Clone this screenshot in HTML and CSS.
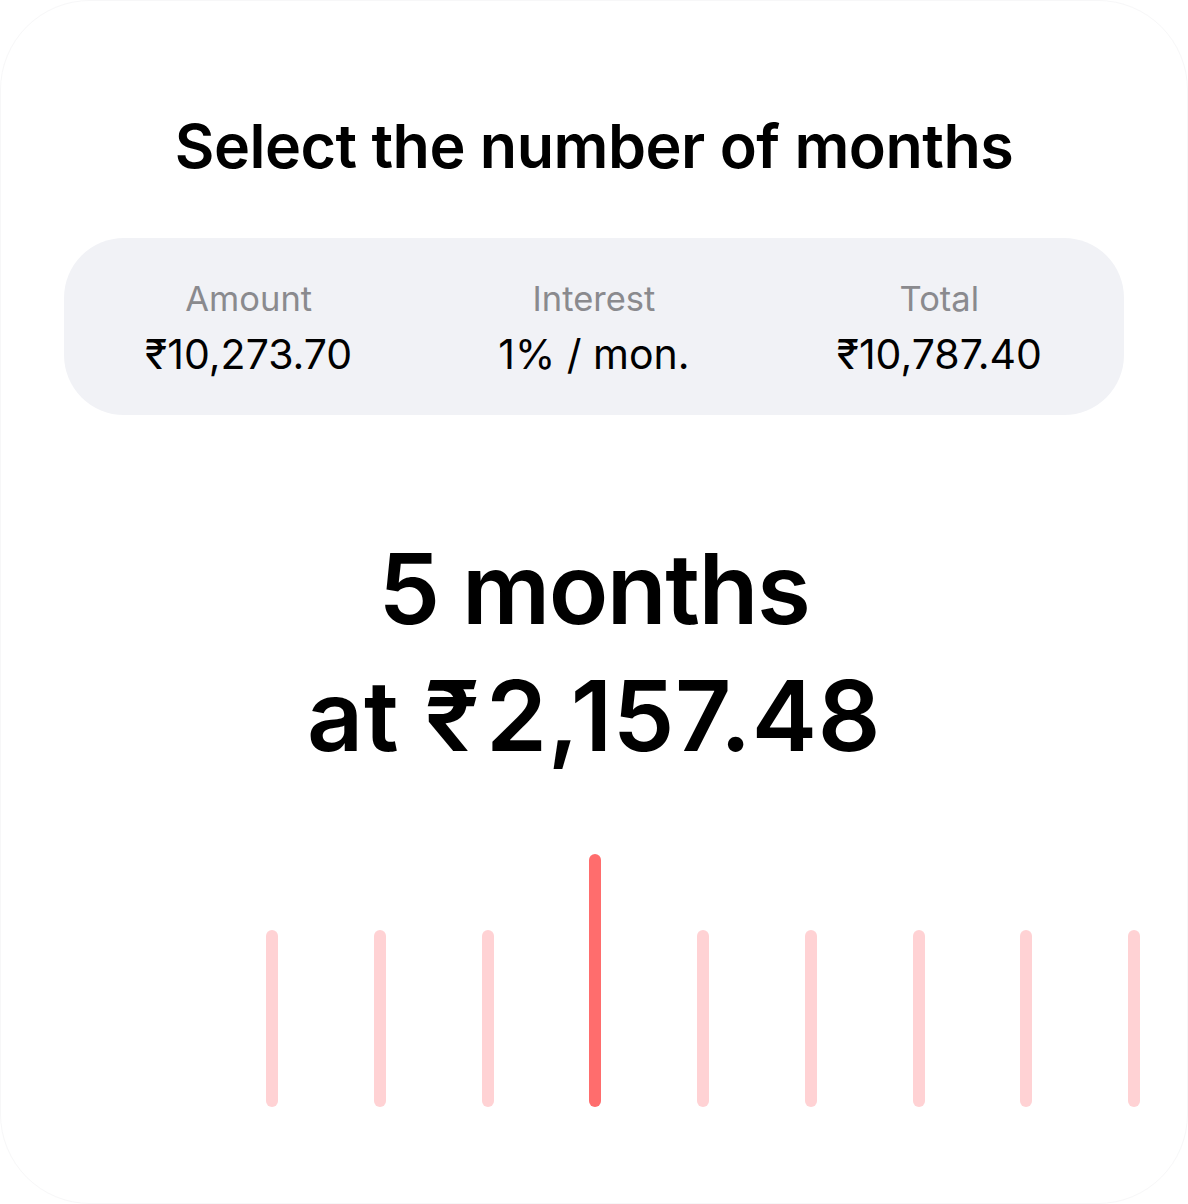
FILE: index.html
```html
<!DOCTYPE html>
<html lang="en">
<head>
    <meta charset="UTF-8">
    <meta name="viewport" content="width=device-width, initial-scale=1.0">
    <title>Select Tenure</title>
    <link rel="stylesheet" href="styles.css">
</head>
<body>
    <div class="sheet">
        <h1 class="title">Select the number of months</h1>

        <div class="summary">
            <div class="summary-item">
                <span class="label">Amount</span>
                <span class="value">₹10,273.70</span>
            </div>
            <div class="summary-item">
                <span class="label">Interest</span>
                <span class="value">1% / mon.</span>
            </div>
            <div class="summary-item">
                <span class="label">Total</span>
                <span class="value">₹10,787.40</span>
            </div>
        </div>

        <div class="selection">
            <div class="months">5 months</div>
            <div class="emi">at <span class="currency">₹</span>2,157.48</div>
        </div>

        <div class="ruler">
            <span class="tick"></span>
            <span class="tick"></span>
            <span class="tick"></span>
            <span class="tick active"></span>
            <span class="tick"></span>
            <span class="tick"></span>
            <span class="tick"></span>
            <span class="tick"></span>
            <span class="tick"></span>
        </div>
    </div>
</body>
</html>
```

FILE: styles.css
```css
:root {
    --text-color: #000000;
    --muted-color: #8a8a8e;
    --panel-background: #f1f2f6;
    --tick-color: #ffd2d4;
    --tick-active: #ff6d6d;
}

* {
    box-sizing: border-box;
}

body {
    margin: 0;
    background: #ffffff;
    font-family: Inter, "Noto Sans", sans-serif;
    color: var(--text-color);
}

.sheet {
    width: 1188px;
    height: 1204px;
    border: 1px solid #f7f7f8;
    border-radius: 90px;
    overflow: hidden;
    padding-top: 108px;
}

.title {
    margin: 0;
    text-align: center;
    font-size: 61px;
    font-weight: 600;
    letter-spacing: -0.5px;
    line-height: 74px;
}

.summary {
    display: grid;
    grid-template-columns: repeat(3, 1fr);
    margin: 55px 63px 0;
    height: 177px;
    padding: 39px 12px 0;
    background-color: var(--panel-background);
    border-radius: 60px;
}

.summary-item {
    display: flex;
    flex-direction: column;
    align-items: center;
}

.label {
    font-size: 34.5px;
    line-height: 44px;
    color: var(--muted-color);
}

.value {
    font-size: 41px;
    line-height: 66px;
}

.selection {
    margin-top: 110px;
    text-align: center;
    font-size: 98px;
    font-weight: 600;
    line-height: 127px;
    letter-spacing: -1.5px;
}

.emi {
    letter-spacing: 0.6px;
}

.currency {
    margin-right: 6px;
}

.ruler {
    display: flex;
    align-items: flex-end;
    gap: 95.75px;
    height: 253px;
    margin-top: 75px;
    padding-left: 265px;
}

.tick {
    width: 12px;
    height: 177px;
    border-radius: 6px;
    background-color: var(--tick-color);
}

.tick.active {
    height: 253px;
    background-color: var(--tick-active);
}
```
